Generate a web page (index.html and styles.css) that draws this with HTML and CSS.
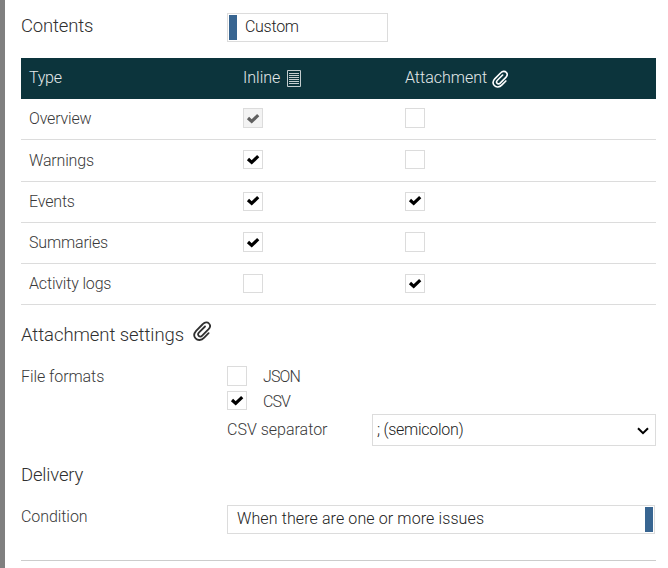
FILE: index.html
```html
<!DOCTYPE html>
<html lang="en">
<head>
<meta charset="utf-8">
<title>Report settings</title>
<link rel="stylesheet" href="styles.css">
</head>
<body>
<svg class="defs" width="0" height="0">
  <symbol id="check" viewBox="0 0 14 12"><path d="M2 6 5.7 9.4 12.2 3.2" fill="none" stroke="currentColor" stroke-width="3.2"/></symbol>
  <symbol id="paperclip" viewBox="0 0 18 20"><path d="M15.6 12.2 11.2 16.6C8.3 19.7 4.6 19.6 2.6 17.4.6 15.2 1 12.2 3.1 9.8L9.9 3C11.8 1 14.6.9 16 2.5 17.5 4.1 17.3 6.4 15.6 8.2L9.2 14.6C8.1 15.8 6.6 15.8 5.7 14.8 4.8 13.8 5 12.5 6.1 11.4L12 5.5" fill="none" stroke="currentColor" stroke-width="1.8" stroke-linecap="round"/></symbol>
</svg>
<main class="panel">
  <section class="contents">
    <h2 class="title"><span class="tight">Contents</span></h2>
    <div class="toggle custom"><i class="knob"></i><span class="tighter">Custom</span></div>
  </section>
  <div class="table">
    <div class="row head">
      <span class="tighter">Type</span>
      <span class="cell"><span>Inline</span><svg class="doc" viewBox="0 0 14 17"><path d="M.5.5h13v16H.5zM2 3.5h10M2 5.5h10M2 7.5h10M2 9.5h10M2 11.5h10M2 13.5h10" fill="none" stroke="currentColor"/></svg></span>
      <span class="cell"><span>Attachment</span><svg class="clip"><use href="#paperclip"/></svg></span>
    </div>
    <div class="row"><span class="tight">Overview</span><i class="box disabled"><svg><use href="#check"/></svg></i><i class="box"></i></div>
    <div class="row tall"><span class="tight">Warnings</span><i class="box short"><svg><use href="#check"/></svg></i><i class="box short"></i></div>
    <div class="row"><span class="tight">Events</span><i class="box short raised"><svg><use href="#check"/></svg></i><i class="box short raised"><svg><use href="#check"/></svg></i></div>
    <div class="row"><span class="tight">Summaries</span><i class="box"><svg><use href="#check"/></svg></i><i class="box"></i></div>
    <div class="row"><span class="tight">Activity logs</span><i class="box short"></i><i class="box short"><svg><use href="#check"/></svg></i></div>
  </div>
  <h2 class="title settings"><span class="slim">Attachment settings</span><svg class="clip big"><use href="#paperclip"/></svg></h2>
  <section class="formats">
    <span class="slim">File formats</span>
    <div class="options">
      <div class="option"><i class="box"></i><span class="acronym">JSON</span></div>
      <div class="option"><i class="box short"><svg><use href="#check"/></svg></i><span class="acronym">CSV</span></div>
      <div class="separator"><span>CSV separator</span>
        <div class="select"><span class="tighter">; (semicolon)</span><svg class="chevron" viewBox="0 0 12 8"><path d="M1 1.2 6 6.2 11 1.2" fill="none" stroke="currentColor" stroke-width="2"/></svg></div>
      </div>
    </div>
  </section>
  <h2 class="title delivery"><span class="tight">Delivery</span></h2>
  <section class="condition">
    <span class="slim">Condition</span>
    <div class="toggle issues"><span class="wide">When there are one or more issues</span><i class="knob"></i></div>
  </section>
</main>
</body>
</html>
```
FILE: styles.css
```css
* { box-sizing: border-box; }
body { margin: 0; background: #fff; color: #393939; font: 300 16px/20px Roboto, sans-serif; overflow: hidden; }
span { white-space: nowrap; }
.tight { letter-spacing: -0.17px; }
.tighter { letter-spacing: -0.28px; }
.slim { letter-spacing: -0.07px; }
.wide { letter-spacing: 0.11px; }
.acronym { letter-spacing: -0.9px; }
.defs { position: absolute; }
.panel { height: 568px; border-left: 5px solid #808080; padding: 13px 12px 0 16px; }
.contents { display: grid; grid-template-columns: 206px 161px; height: 45px; align-items: start; }
.title { margin: 0; font-size: 18.5px; line-height: 26px; font-weight: 300; color: #303030; }
.toggle { height: 29px; border: 1px solid #dcdcdc; padding: 1px; display: flex; align-items: center; color: #222; }
.toggle span { padding-bottom: 2px; }
.knob { width: 8px; height: 25px; background: #386591; flex: none; }
.custom { gap: 8px; }
.row { display: grid; grid-template-columns: 214px 162px 1fr; height: 41px; padding-left: 8px; border-bottom: 1px solid #dcdcdc; align-items: center; }
.head { background: #0c343c; color: #e4e9ea; border: 0; padding-bottom: 1px; }
.tall { height: 42px; }
.cell { display: flex; align-items: center; }
.doc { width: 14px; height: 17px; margin: 1px 0 0 7px; color: #c4cdcf; }
.clip { width: 16px; height: 18px; margin: 1px 0 0 5px; color: #fff; }
.clip.big { width: 18px; height: 20px; margin: 0 0 8px 9px; color: #303030; }
.box { width: 20px; height: 20px; border: 1px solid #dcdcdc; display: flex; align-items: center; justify-content: center; padding-bottom: 1px; color: #000; background: #fff; margin-bottom: 2px; }
.box.short { height: 19px; }
.box svg { width: 14px; height: 12px; }
.box.raised svg { margin-bottom: 1px; }
.box.disabled { background: #f3f3f3; color: #606060; }
.settings { display: flex; align-items: center; margin-top: 17px; height: 26px; }
.formats, .condition { display: grid; grid-template-columns: 206px 1fr; }
.formats { margin-top: 18px; line-height: 21px; }
.option { display: flex; gap: 16px; height: 25px; align-items: flex-start; }
.option .box { margin: 0; }
.separator { display: grid; grid-template-columns: 145px 1fr; margin-top: -2px; line-height: 32px; }
.select { height: 32px; line-height: 30px; border: 1px solid #dcdcdc; padding: 0 6px 0 4px; display: flex; justify-content: space-between; align-items: center; color: #222; }
.chevron { width: 12px; height: 8px; color: #000; margin-top: 2px; }
.delivery { margin-top: 16px; }
.condition { margin-top: 17px; height: 56px; border-bottom: 1px solid #ccc; line-height: 24px; }
.issues { justify-content: space-between; padding-left: 9px; margin-right: 1px; }
```
